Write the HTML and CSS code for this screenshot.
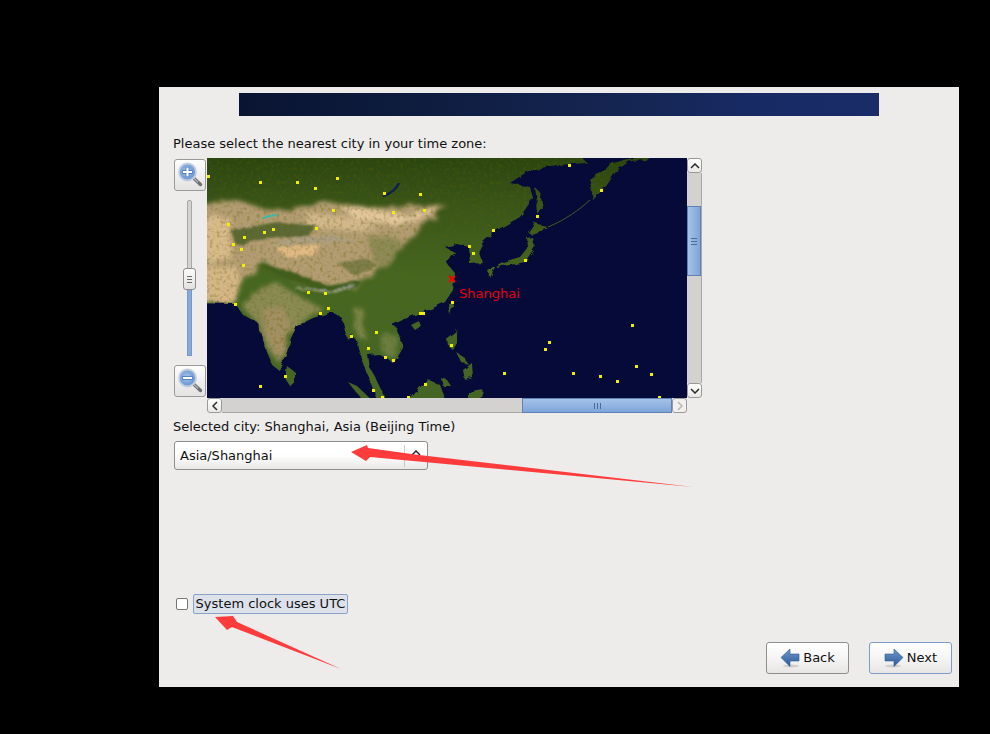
FILE: index.html
```html
<!DOCTYPE html>
<html lang="en">
<head>
<meta charset="utf-8">
<title>Time zone selection</title>
<link rel="stylesheet" href="styles.css">
</head>
<body>
<svg width="0" height="0" class="defs">
  <defs>
    <radialGradient id="lens" cx="45%" cy="45%" r="60%"><stop offset="0" stop-color="#a9c6ea"/><stop offset="0.75" stop-color="#6f9bd6"/><stop offset="1" stop-color="#7fa4d6"/></radialGradient>
    <linearGradient id="arrowfill" x1="0" y1="0" x2="0" y2="1"><stop offset="0" stop-color="#6f97c8"/><stop offset="1" stop-color="#2b5a9b"/></linearGradient>
    <symbol id="mag" viewBox="0 0 26 26">
      <path d="M17 16.500l6.500 6" stroke="#6e7074" stroke-width="3.400" stroke-linecap="round" fill="none"/>
      <path d="M17 16.500l4 3.700" stroke="#b4b6b9" stroke-width="1.200" fill="none"/>
      <circle cx="10.500" cy="10" r="8.500" fill="url(#lens)" stroke="#c3cedc" stroke-width="1.800"/>
    </symbol>
  </defs>
</svg>
<main class="window">
  <div class="banner"></div>
  <p class="prompt">Please select the nearest city in your time zone:</p>
  <section class="tz">
    <div class="zoom-col">
      <button class="zoom-btn" type="button" aria-label="Zoom in">
        <svg class="mag" width="26" height="26" viewBox="0 0 26 26"><use href="#mag"/><path d="M5.500 10h10M10.500 5v10" stroke="#3f6fb0" stroke-width="3.600"/><path d="M6 10h9M10.500 5.500v9" stroke="#fff" stroke-width="2.200"/></svg>
      </button>
      <div class="slider"><div class="slider-fill"></div><div class="slider-handle"><i></i><i></i><i></i></div></div>
      <button class="zoom-btn" type="button" aria-label="Zoom out">
        <svg class="mag" width="26" height="26" viewBox="0 0 26 26"><use href="#mag"/><path d="M5.500 10h10" stroke="#3f6fb0" stroke-width="3.800"/><path d="M6 10h9" stroke="#fff" stroke-width="2.200"/></svg>
      </button>
    </div>
    <div class="map-wrap">
      <svg class="map" width="480" height="240" viewBox="0 0 480 240">
        <defs>
          <filter id="coast" x="-5%" y="-5%" width="110%" height="110%">
            <feTurbulence type="fractalNoise" baseFrequency="0.14" numOctaves="2" seed="5"/>
            <feDisplacementMap in="SourceGraphic" scale="5"/>
            <feGaussianBlur stdDeviation="0.500"/>
          </filter>
          <mask id="land" maskUnits="userSpaceOnUse" x="0" y="0" width="480" height="240">
            <g filter="url(#coast)" fill="#fff">
              <path d="M-10 -10H366L380 5 350 7 323 12 303 25 323 29 326 40 313 59 290 72 276 84 272 92 276 105 263 106 262 89 250 86 238 89 250 96 238 102 241 107 248 115 246 132 238 144 226 150 213 155 200 160 185 167 190 170 196 190 190 200 186 205 180 200 172 196 161 197 163 210 170 222 178 239 174 250 160 216 154 200 149 182 145 177 140 181 135 160 125 154 106 160 90 168 84 180 80 194 72 212 66 208 60 194 50 164 36 157 28 145 -10 144Z"/>
              <path d="M450 -5L416 2 406 5 383 22 386 42 400 27 410 12 423 3 440 2Z"/>
              <path d="M328 29L333 35 336 50 331 57 330 45Z"/>
              <path d="M321 74L328 64 341 70 331 75 325 77Z"/>
              <path d="M280 112L283 120 288 109 303 107 318 104 328 89 325 79 320 80 321 89 313 99 296 104 286 109Z"/>
              <path d="M241 145L247 144 243 157Z"/>
              <path d="M204 167L212 163 214 168 208 172Z"/>
              <path d="M240 180L250 172 250 185 246 192 241 188Z"/>
              <path d="M250 195L258 200 262 207 254 204Z"/>
              <path d="M256 212L265 205 266 220 258 222Z"/>
              <path d="M80 208L88 214 88 224 83 228 78 220Z"/>
              <path d="M141 224L150 228 168 245H158Z"/>
              <path d="M200 245L220 221 233 227 240 245Z"/>
              <path d="M234 220L240 222 244 228 236 228Z"/>
              <path d="M262 235L276 232 272 245H262Z"/>
            </g>
          </mask>
          <linearGradient id="north" x1="0" y1="0" x2="0" y2="1"><stop offset="0" stop-color="#2b4510"/><stop offset="0.2" stop-color="#3a5518"/><stop offset="0.5" stop-color="#466722"/><stop offset="1" stop-color="#446526"/></linearGradient>
          <filter id="soft" x="-10%" y="-10%" width="120%" height="120%">
            <feTurbulence type="fractalNoise" baseFrequency="0.08" numOctaves="3" seed="11"/>
            <feDisplacementMap in="SourceGraphic" scale="10"/>
            <feGaussianBlur stdDeviation="2"/>
          </filter>
          <filter id="soft2" x="-10%" y="-10%" width="120%" height="120%">
            <feTurbulence type="fractalNoise" baseFrequency="0.15" numOctaves="2" seed="2"/>
            <feDisplacementMap in="SourceGraphic" scale="5"/>
            <feGaussianBlur stdDeviation="1"/>
          </filter>
          <filter id="grain">
            <feTurbulence type="fractalNoise" baseFrequency="0.3" numOctaves="2" seed="3"/>
            <feColorMatrix values="0 0 0 0 0.100  0 0 0 0 0.120  0 0 0 0 0  1 0 0 0 -0.480"/>
          </filter>
        </defs>
        <rect width="480" height="240" fill="#050a38"/>
        <g mask="url(#land)">
          <rect width="480" height="240" fill="url(#north)"/>
          <g filter="url(#soft)">
            <path d="M-10 46L30 42 70 54 120 42 160 50 240 46 222 64 200 84 180 104 160 118 150 128 120 132 90 124 60 106 36 120 28 146H-10Z" fill="#b39c72"/>
            <path d="M130 46L165 52 200 56 234 48 218 60 190 66 150 62Z" fill="#e3c69c"/>
            <path d="M-10 60L22 58 24 100 0 104Z" fill="#d9ba8b"/>
            <path d="M-10 108L30 108 34 130 28 146H-10Z" fill="#d6b687"/>
            <path d="M100 54L150 60 170 70 130 72 100 68Z" fill="#d3b88c"/>
            <path d="M160 80L196 80 188 102 168 108Z" fill="#8e8a56"/>
            <path d="M36 150L52 128 72 126 95 140 118 152 100 160 86 172 72 205 60 190 50 164Z" fill="#8a8a52"/>
            <path d="M55 150L78 150 84 170 72 205 60 180Z" fill="#a28f62"/>
            <path d="M145 150L155 150 160 182 150 178Z" fill="#7b8549"/>
            <path d="M172 176L192 178 190 200 176 196Z" fill="#6c7e42"/>
          </g>
          <g filter="url(#soft2)">
            <path d="M24 72L70 64 110 68 100 78 60 80 30 88Z" fill="#5c6834"/>
            <path d="M68 90L113 86 108 97 82 100Z" fill="#e0b985"/>
            <path d="M60 88L88 80 128 78 152 84 128 84 90 86Z" fill="#aaa08a" opacity=".7"/>
            <path d="M50 106L80 122 120 134 150 130 156 122 122 128 85 114Z" fill="#3f5d1f"/>
            <path d="M88 130L128 134 148 127" stroke="#c9c7c1" stroke-width="1" fill="none"/>
            <path d="M130 105L160 100 172 108 148 118Z" fill="#7d7d4a"/>
          </g>
          <rect width="480" height="240" filter="url(#grain)"/>
        </g>
        <path d="M341 69C358 62 372 52 383 42" stroke="#3f5c24" stroke-width="1" fill="none"/>
        <path d="M56 61C58 58 64 58 70 57" stroke="#3db8a8" stroke-width="2" fill="none"/>
        <path d="M176 38C184 36 190 30 192 25" stroke="#12204f" stroke-width="2.500" fill="none"/>
        <g class="dots" fill="#f2ee00">
          <rect x="0" y="17" width="3" height="3"/><rect x="52" y="23" width="3" height="3"/><rect x="89" y="23" width="3" height="3"/><rect x="107" y="29" width="3" height="3"/><rect x="129" y="19" width="3" height="3"/><rect x="176" y="34" width="3" height="3"/><rect x="212" y="35" width="3" height="3"/><rect x="185" y="53" width="3" height="3"/><rect x="216" y="51" width="3" height="3"/><rect x="125" y="51" width="3" height="3"/><rect x="20" y="65" width="3" height="3"/><rect x="108" y="69" width="3" height="3"/><rect x="65" y="70" width="3" height="3"/><rect x="56" y="73" width="3" height="3"/><rect x="36" y="78" width="3" height="3"/><rect x="25" y="85" width="3" height="3"/><rect x="33" y="90" width="3" height="3"/><rect x="35" y="106" width="3" height="3"/><rect x="100" y="133" width="3" height="3"/><rect x="117" y="134" width="3" height="3"/><rect x="27" y="145" width="3" height="3"/><rect x="120" y="149" width="3" height="3"/><rect x="112" y="154" width="3" height="3"/><rect x="244" y="143" width="3" height="3"/><rect x="212" y="154" width="3" height="3"/><rect x="215" y="154" width="3" height="3"/><rect x="168" y="173" width="3" height="3"/><rect x="143" y="177" width="3" height="3"/><rect x="243" y="186" width="3" height="3"/><rect x="160" y="189" width="3" height="3"/><rect x="177" y="198" width="3" height="3"/><rect x="185" y="201" width="3" height="3"/><rect x="77" y="217" width="3" height="3"/><rect x="52" y="227" width="3" height="3"/><rect x="217" y="225" width="3" height="3"/><rect x="165" y="231" width="3" height="3"/><rect x="174" y="238" width="3" height="3"/><rect x="200" y="238" width="3" height="3"/><rect x="361" y="6" width="3" height="3"/><rect x="393" y="31" width="3" height="3"/><rect x="329" y="57" width="3" height="3"/><rect x="285" y="71" width="3" height="3"/><rect x="261" y="87" width="3" height="3"/><rect x="265" y="94" width="3" height="3"/><rect x="317" y="101" width="3" height="3"/><rect x="424" y="166" width="3" height="3"/><rect x="341" y="183" width="3" height="3"/><rect x="337" y="190" width="3" height="3"/><rect x="296" y="214" width="3" height="3"/><rect x="365" y="214" width="3" height="3"/><rect x="392" y="217" width="3" height="3"/><rect x="409" y="222" width="3" height="3"/><rect x="428" y="207" width="3" height="3"/><rect x="443" y="215" width="3" height="3"/><rect x="451" y="238" width="3" height="3"/>
        </g>
        <path d="M242 118L248 124M248 118L242 124" stroke="#ff0000" stroke-width="2"/>
        <text class="city" x="252" y="140">Shanghai</text>
      </svg>
      <div class="vscroll">
        <div class="sb-btn sb-v"><svg width="10" height="6" viewBox="0 0 10 6"><path d="M1 5l4-4 4 4" class="chev"/></svg></div>
        <div class="vtrack"><div class="vthumb"><i></i><i></i><i></i></div></div>
        <div class="sb-btn sb-v"><svg width="10" height="6" viewBox="0 0 10 6"><path d="M1 1l4 4 4-4" class="chev"/></svg></div>
      </div>
      <div class="hscroll">
        <div class="sb-btn sb-h"><svg width="6" height="10" viewBox="0 0 6 10"><path d="M5 1L1 5l4 4" class="chev"/></svg></div>
        <div class="htrack"><div class="hthumb"><i></i><i></i><i></i></div></div>
        <div class="sb-btn sb-h sb-off"><svg width="6" height="10" viewBox="0 0 6 10"><path d="M1 1l4 4-4 4" class="chev chev-off"/></svg></div>
      </div>
    </div>
  </section>
  <p class="selected">Selected city: Shanghai, Asia (Beijing Time)</p>
  <div class="combo"><span class="combo-text">Asia/Shanghai</span><span class="combo-sep"></span><svg class="combo-chev" width="10" height="6" viewBox="0 0 10 6"><path d="M1 5l4-4 4 4" class="chev"/></svg></div>
  <label class="utc"><span class="check"></span><span class="utc-label">System clock uses UTC</span></label>
  <div class="actions">
    <button class="nav" type="button">
      <svg width="20" height="20" viewBox="0 0 20 20"><ellipse cx="11" cy="18" rx="8" ry="1.500" fill="#cfcecd"/><path d="M1 9.500L10 1v5h9v7h-9v5.500z" fill="url(#arrowfill)" stroke="#2b5a9b" stroke-width=".6"/></svg>
      <span>Back</span>
    </button>
    <button class="nav nav-default" type="button">
      <svg width="20" height="20" viewBox="0 0 20 20"><ellipse cx="9" cy="18" rx="8" ry="1.500" fill="#cfcecd"/><path d="M19 9.500L10 1v5H1v7h9v5.500z" fill="url(#arrowfill)" stroke="#2b5a9b" stroke-width=".6"/></svg>
      <span>Next</span>
    </button>
  </div>
</main>
<svg class="marks" width="990" height="734" viewBox="0 0 990 734">
  <path d="M351 452L367 445 368 448 415 454.500 693 487 370 457 366 461Z" fill="#ff3b3b"/>
  <path d="M215 617L233 616 237 622 341 669 232 627 227 630Z" fill="#ff3b3b"/>
</svg>
</body>
</html>
```
FILE: styles.css
```css
* { box-sizing: border-box; }
html, body { margin: 0; height: 100%; }
body {
  background: #000;
  padding: 87px 0 0 159px;
  font-family: "DejaVu Sans", sans-serif;
  font-size: 13px;
  line-height: 16px;
  color: #111;
  overflow: hidden;
  position: relative;
}
.defs { position: absolute; }
.window {
  width: 800px;
  height: 600px;
  background: #edeceb;
  padding: 6px 7px 13px 14px;
  display: flex;
  flex-direction: column;
}
.banner {
  width: 640px;
  height: 23px;
  margin-left: 66px;
  flex: none;
  background: linear-gradient(90deg, #0a1432 0%, #0d1b3d 25%, #14244f 55%, #182b66 85%, #1a2c68 100%);
}
.prompt { margin: 20px 0 0; }
.tz { display: flex; margin-top: 6px; flex: none; }
.zoom-col {
  width: 34px;
  height: 240px;
  padding: 1px;
  display: flex;
  flex-direction: column;
  align-items: center;
}
.zoom-btn {
  width: 32px;
  height: 32px;
  padding: 0;
  flex: none;
  border: 1px solid #9b9a99;
  border-radius: 3px;
  background: linear-gradient(#fdfdfd, #e4e3e2);
  display: flex;
  align-items: center;
  justify-content: center;
}
.mag { display: block; }
.slider {
  width: 5px;
  height: 156px;
  margin: 9px 2px 9px 0;
  flex: none;
  position: relative;
  background: #d3d2d1;
  border: 1px solid #a9a8a7;
  border-radius: 2px;
}
.slider-fill {
  position: absolute;
  left: -1px;
  right: -1px;
  top: 78px;
  bottom: -1px;
  background: #86aadb;
  border: 1px solid #7597c8;
}
.slider-handle {
  position: absolute;
  left: -5px;
  top: 67px;
  width: 13px;
  height: 22px;
  background: linear-gradient(#fbfbfb, #e2e1e0);
  border: 1px solid #8e8d8c;
  border-radius: 3px;
  display: flex;
  flex-direction: column;
  align-items: center;
  justify-content: center;
  gap: 2px;
}
.slider-handle i { width: 5px; height: 1px; background: #6d6d6d; }
.map-wrap {
  display: grid;
  grid-template-columns: 480px 15px;
  grid-template-rows: 240px 15px;
}
.map { display: block; }
.city {
  font-family: "DejaVu Sans", sans-serif;
  font-size: 13px;
  fill: #e4000f;
}
.vscroll { display: flex; flex-direction: column; width: 15px; height: 240px; }
.hscroll { display: flex; width: 480px; height: 15px; }
.sb-btn {
  flex: none;
  background: linear-gradient(#fff, #e9e8e7);
  border: 1px solid #9b9a99;
  display: flex;
  align-items: center;
  justify-content: center;
}
.sb-v { width: 15px; height: 15px; border-radius: 3px; }
.sb-h { width: 15px; height: 15px; border-radius: 3px; }
.sb-off { background: #f1f0ef; }
.chev { fill: none; stroke: #2a2a2a; stroke-width: 1.500; }
.chev-off { stroke: #b5b4b3; }
.vtrack, .htrack { flex: 1; background: #d3d2d1; display: flex; }
.vtrack { padding-top: 33px; border-right: 1px solid #a9a8a7; }
.htrack { justify-content: flex-end; border-bottom: 1px solid #a9a8a7; }
.vthumb {
  width: 15px;
  height: 70px;
  background: linear-gradient(90deg, #a6c3e8, #7ea5d8);
  border: 1px solid #5f82b5;
  display: flex;
  flex-direction: column;
  align-items: center;
  justify-content: center;
  gap: 2px;
}
.vthumb i { width: 6px; height: 1px; background: #4a6a9c; }
.hthumb {
  width: 150px;
  height: 15px;
  background: linear-gradient(#a6c3e8, #7ea5d8);
  border: 1px solid #5f82b5;
  display: flex;
  align-items: center;
  justify-content: center;
  gap: 2px;
}
.hthumb i { width: 1px; height: 6px; background: #4a6a9c; }
.selected { margin: 6px 0 0; }
.combo {
  width: 254px;
  height: 29px;
  margin: 6px 0 0 1px;
  flex: none;
  border: 1px solid #8f8e8d;
  border-radius: 3px;
  background: linear-gradient(#fff 0%, #fff 45%, #e9e8e7 100%);
  display: flex;
  align-items: center;
  padding-left: 5px;
}
.combo-text { flex: 1; }
.combo-sep { width: 1px; height: 22px; background: #c9c8c7; margin-right: 6px; }
.combo-chev { margin-right: 6px; margin-bottom: 6px; }
.utc {
  display: flex;
  align-items: center;
  margin: 124px 0 0 3px;
  flex: none;
}
.check {
  width: 12px;
  height: 12px;
  background: #fff;
  border: 1px solid #77767a;
  border-radius: 2px;
  margin-right: 5px;
}
.utc-label {
  width: 155px;
  height: 20px;
  line-height: 17px;
  text-align: center;
  white-space: nowrap;
  background: #dde1ea;
  border: 1px solid #89a3c8;
  border-radius: 2px;
  color: #111;
}
.actions {
  margin-top: auto;
  display: flex;
  justify-content: flex-end;
  gap: 20px;
}
.nav {
  width: 83px;
  height: 32px;
  padding: 0;
  display: flex;
  align-items: center;
  justify-content: center;
  gap: 3px;
  font: inherit;
  color: #111;
  background: linear-gradient(#fff 0%, #f6f5f5 50%, #e7e6e5 100%);
  border: 1px solid #8f8e8d;
  border-radius: 3px;
}
.nav-default { border-color: #7f9cc6; }
.marks { position: absolute; left: 0; top: 0; pointer-events: none; }
```
